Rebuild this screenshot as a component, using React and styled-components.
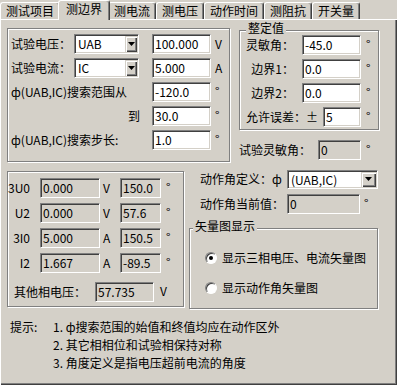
import styled, { createGlobalStyle } from 'styled-components';

const GlobalStyle = createGlobalStyle`
    body {
        margin: 0;
        background: #d4d0c8;
    }
    * {
        box-sizing: border-box;
    }
`;

const Window = styled.div`
    width: 397px;
    height: 385px;
    display: flex;
    flex-direction: column;
    background: #d4d0c8;
    font-family: 'Noto Sans CJK SC', 'Noto Sans', sans-serif;
    font-size: 12px;
    line-height: 14px;
    color: #000;
    overflow: hidden;
`;

const TabBar = styled.div`
    position: relative;
    z-index: 1;
    display: flex;
    align-items: flex-end;
    height: 19px;
`;

const Tab = styled.div`
    position: relative;
    z-index: ${(p) => (p.$active ? 2 : 1)};
    height: ${(p) => (p.$active ? 20 : 17)}px;
    margin: ${(p) => (p.$active ? '0 -2px -1px' : '0')};
    padding: ${(p) => (p.$active ? '0 7px 4px' : '0 5px 1px')};
    display: flex;
    align-items: center;
    white-space: nowrap;
    background: #d4d0c8;
    border-left: 1px solid #fff;
    border-top: 1px solid #fff;
    border-right: 1px solid #404040;
    border-radius: 3px 3px 0 0;
    box-shadow: inset -1px 0 0 #808080;
`;

const Panel = styled.div`
    flex: 1;
    display: flex;
    flex-direction: column;
    padding: 9px 0 0 7px;
    box-shadow: inset 1px 1px 0 #fff, inset -1px -1px 0 #404040,
        inset -2px -2px 0 #808080;
`;

const Row = styled.div`
    display: flex;
    align-items: flex-start;
    margin-top: ${(p) => p.$mt || 0}px;
`;

const Column = styled.div`
    display: flex;
    flex-direction: column;
    width: ${(p) => p.$w}px;
    margin-left: ${(p) => p.$ml || 0}px;
`;

const GroupBox = styled.div`
    position: relative;
    display: flex;
    flex-direction: column;
    gap: ${(p) => p.$gap ?? 4}px;
    width: ${(p) => p.$w}px;
    height: ${(p) => p.$h}px;
    margin-top: ${(p) => p.$mt || 0}px;
    padding: ${(p) => p.$pad};
    border: 1px solid #808080;
    box-shadow: 1px 1px 0 #fff, inset 1px 1px 0 #fff;
`;

const Legend = styled.span`
    position: absolute;
    top: -10px;
    left: ${(p) => p.$left}px;
    padding: 0 2px;
    line-height: 13px;
    background: #d4d0c8;
    white-space: nowrap;
`;

const FormRow = styled.div`
    display: flex;
    align-items: center;
    height: 20px;
    margin-top: ${(p) => p.$mt || 0}px;
`;

const Label = styled.span`
    flex: none;
    width: ${(p) => p.$w}px;
    padding: ${(p) => p.$pad || '0'};
    text-align: ${(p) => p.$align || 'left'};
    white-space: nowrap;
`;

const Field = styled.div`
    flex: none;
    width: ${(p) => p.$w}px;
    height: 20px;
    margin-left: ${(p) => p.$ml || 0}px;
    padding-left: 2px;
    line-height: 18px;
    white-space: nowrap;
    background: ${(p) => (p.$ro ? '#d4d0c8' : '#fff')};
    border-style: solid;
    border-width: 1px;
    border-color: #808080 #fff #fff #808080;
    box-shadow: inset 1px 1px 0 #404040, inset -1px -1px 0 #d4d0c8;
`;

const Unit = styled.span`
    flex: none;
    margin-left: ${(p) => p.$ml ?? 4}px;
    width: ${(p) => (p.$w ? `${p.$w}px` : 'auto')};
    align-self: ${(p) => (p.$sup ? 'flex-start' : 'center')};
    padding-top: ${(p) => (p.$sup ? 2 : 0)}px;
`;

const Combo = styled.div`
    flex: none;
    display: flex;
    align-items: stretch;
    width: ${(p) => p.$w}px;
    height: ${(p) => p.$h || 20}px;
    padding: 1px;
    background: #fff;
    border-style: solid;
    border-width: 1px;
    border-color: #808080 #fff #fff #808080;
    box-shadow: inset 1px 1px 0 #404040, inset -1px -1px 0 #d4d0c8;
`;

const ComboText = styled.span`
    flex: 1;
    padding-left: 2px;
    line-height: ${(p) => p.$lh || 16}px;
    white-space: nowrap;
`;

const DropButton = styled.span`
    flex: none;
    width: ${(p) => p.$w}px;
    display: flex;
    align-items: center;
    justify-content: center;
    background: #d4d0c8;
    box-shadow: inset 1px 1px 0 #d4d0c8, inset 2px 2px 0 #fff,
        inset -1px -1px 0 #404040, inset -2px -2px 0 #808080;
`;

const RadioRow = styled.label`
    display: flex;
    align-items: center;
    height: 14px;
    padding-left: 15px;
    margin-top: ${(p) => p.$mt || 0}px;
`;

const RadioCircle = styled.span`
    flex: none;
    width: 12px;
    height: 12px;
    margin-right: 5px;
    border-radius: 50%;
    background: #fff;
    border: 1px solid;
    border-color: #808080 #fff #fff #808080;
    box-shadow: inset 1px 1px 0 #404040;
    display: flex;
    align-items: center;
    justify-content: center;

    &::after {
        content: '';
        display: ${(p) => (p.$checked ? 'block' : 'none')};
        width: 4px;
        height: 4px;
        border-radius: 50%;
        background: #000;
    }
`;

const Tips = styled.div`
    display: grid;
    grid-template-columns: 46px auto;
    margin-top: 9px;
    line-height: 18px;
`;

const TipTitle = styled.span`
    padding-left: 3px;
`;

const TipLine = styled.span`
    grid-column: 2;
`;

const tabs = ['测试项目', '测边界', '测电流', '测电压', '动作时间', '测阻抗', '开关量'];

const phaseRows = [
    { name: '3U0', value: '0.000', unit: 'V', angle: '150.0' },
    { name: 'U2', value: '0.000', unit: 'V', angle: '57.6' },
    { name: '3I0', value: '5.000', unit: 'A', angle: '150.5' },
    { name: 'I2', value: '1.667', unit: 'A', angle: '-89.5' },
];

function Arrow() {
    return (
        <svg width="7" height="4" viewBox="0 0 7 4">
            <polygon points="0,0 7,0 3.5,4" fill="#000" />
        </svg>
    );
}

function Select({ value, width, height, buttonWidth, lh }) {
    return (
        <Combo $w={width} $h={height}>
            <ComboText $lh={lh}>{value}</ComboText>
            <DropButton $w={buttonWidth}>
                <Arrow />
            </DropButton>
        </Combo>
    );
}

function App() {
    return (
        <Window>
            <GlobalStyle />
            <TabBar>
                {tabs.map((t, i) => (
                    <Tab key={t} $active={i === 1}>
                        {t}
                    </Tab>
                ))}
            </TabBar>
            <Panel>
                <Row>
                    <GroupBox $w={223} $h={134} $pad="5px 0 0 3px">
                        <FormRow>
                            <Label $w={63}>试验电压：</Label>
                            <Select value="UAB" width={65} buttonWidth={12} />
                            <Field $w={59} $ml={13}>100.000</Field>
                            <Unit>V</Unit>
                        </FormRow>
                        <FormRow>
                            <Label $w={63}>试验电流：</Label>
                            <Select value="IC" width={65} buttonWidth={12} />
                            <Field $w={59} $ml={13}>5.000</Field>
                            <Unit>A</Unit>
                        </FormRow>
                        <FormRow>
                            <Label $w={141}>ф(UAB,IC)搜索范围从</Label>
                            <Field $w={59}>-120.0</Field>
                            <Unit $sup>°</Unit>
                        </FormRow>
                        <FormRow>
                            <Label $w={141} $align="right" $pad="0 12px 0 0">
                                到
                            </Label>
                            <Field $w={59}>30.0</Field>
                            <Unit $sup>°</Unit>
                        </FormRow>
                        <FormRow>
                            <Label $w={141}>ф(UAB,IC)搜索步长:</Label>
                            <Field $w={59}>1.0</Field>
                            <Unit $sup>°</Unit>
                        </FormRow>
                    </GroupBox>
                    <Column $w={140} $ml={9}>
                        <GroupBox $w={140} $h={100} $mt={2} $pad="4px 0 0 0">
                            <Legend $left={6}>整定值</Legend>
                            <FormRow>
                                <Label $w={62} $align="right" $pad="0 8px 0 0">
                                    灵敏角：
                                </Label>
                                <Field $w={59}>-45.0</Field>
                                <Unit $sup $ml={5}>°</Unit>
                            </FormRow>
                            <FormRow>
                                <Label $w={62} $align="right" $pad="0 8px 0 0">
                                    边界1：
                                </Label>
                                <Field $w={59}>0.0</Field>
                                <Unit $sup $ml={5}>°</Unit>
                            </FormRow>
                            <FormRow>
                                <Label $w={62} $align="right" $pad="0 8px 0 0">
                                    边界2：
                                </Label>
                                <Field $w={59}>0.0</Field>
                                <Unit $sup $ml={5}>°</Unit>
                            </FormRow>
                            <FormRow>
                                <Label $w={83} $pad="0 0 0 6px">
                                    允许误差：±
                                </Label>
                                <Field $w={38}>5</Field>
                                <Unit $sup $ml={5}>°</Unit>
                            </FormRow>
                        </GroupBox>
                        <FormRow $mt={10}>
                            <Label $w={79}>试验灵敏角：</Label>
                            <Field $w={43} $ro>
                                0
                            </Field>
                            <Unit $sup $ml={5}>°</Unit>
                        </FormRow>
                    </Column>
                </Row>
                <Row $mt={7}>
                    <GroupBox $w={177} $h={136} $mt={2} $gap={5} $pad="6px 0 0 0">
                        {phaseRows.map((r) => (
                            <FormRow key={r.name}>
                                <Label $w={22} $align="right">
                                    {r.name}
                                </Label>
                                <Field $w={60} $ml={10} $ro>
                                    {r.value}
                                </Field>
                                <Unit $ml={3} $w={17}>
                                    {r.unit}
                                </Unit>
                                <Field $w={41} $ro>
                                    {r.angle}
                                </Field>
                                <Unit $sup $ml={5}>°</Unit>
                            </FormRow>
                        ))}
                        <FormRow $mt={4}>
                            <Label $w={87} $pad="0 0 0 6px">
                                其他相电压：
                            </Label>
                            <Field $w={59} $ro>
                                57.735
                            </Field>
                            <Unit $sup $ml={6}>V</Unit>
                        </FormRow>
                    </GroupBox>
                    <Column $w={189} $ml={5}>
                        <FormRow>
                            <Label $w={98} $pad="0 0 0 11px">
                                动作角定义：ф
                            </Label>
                            <Select
                                value="(UAB,IC)"
                                width={91}
                                height={19}
                                buttonWidth={15}
                                lh={15}
                            />
                        </FormRow>
                        <FormRow $mt={5}>
                            <Label $w={98} $pad="0 0 0 11px">
                                动作角当前值：
                            </Label>
                            <Field $w={73} $ro>
                                0
                            </Field>
                            <Unit $sup $ml={4}>°</Unit>
                        </FormRow>
                        <GroupBox $w={189} $h={81} $mt={14} $gap={0} $pad="22px 0 0 0">
                            <Legend $left={3}>矢量图显示</Legend>
                            <RadioRow>
                                <RadioCircle $checked />
                                显示三相电压、电流矢量图
                            </RadioRow>
                            <RadioRow $mt={16}>
                                <RadioCircle />
                                显示动作角矢量图
                            </RadioRow>
                        </GroupBox>
                    </Column>
                </Row>
                <Tips>
                    <TipTitle>提示:</TipTitle>
                    <TipLine>1. ф搜索范围的始值和终值均应在动作区外</TipLine>
                    <TipLine>2. 其它相相位和试验相保持对称</TipLine>
                    <TipLine>3. 角度定义是指电压超前电流的角度</TipLine>
                </Tips>
            </Panel>
        </Window>
    );
}

export default App;
